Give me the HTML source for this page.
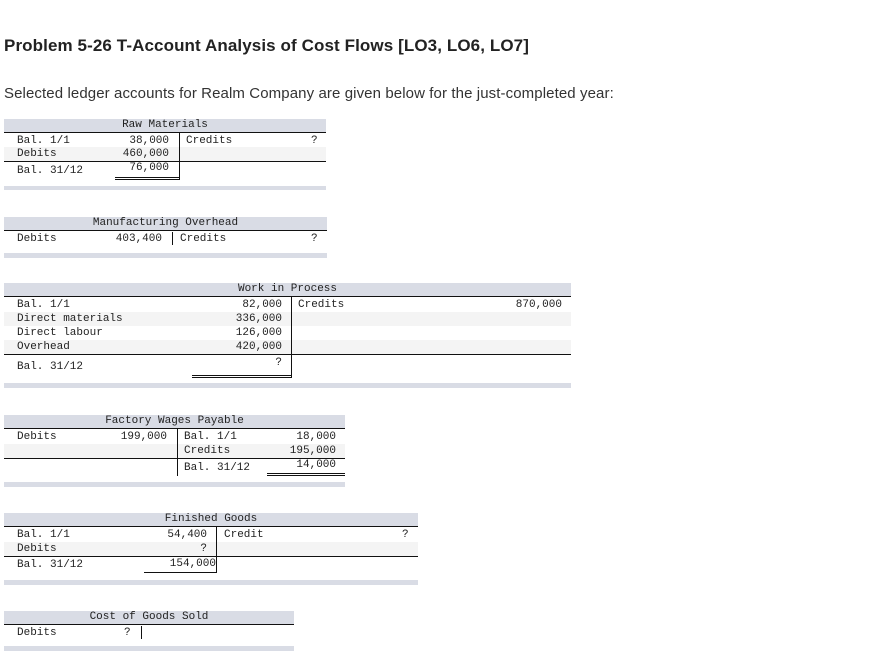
<!DOCTYPE html>
<html><head><meta charset="utf-8"><style>
*{margin:0;padding:0;box-sizing:border-box}
body{width:880px;height:651px;background:#fff;position:relative;overflow:hidden;font-family:"Liberation Sans",sans-serif;color:#222}
.a{position:absolute}
.t{position:absolute;font:11px/14px "Liberation Mono",monospace;white-space:pre;color:#222}
.band{position:absolute;background:#d9dce5}
.lg{position:absolute;background:#f4f4f4}
.k{position:absolute;background:#111}
</style></head><body>
<div class="a" style="left:4px;top:36px;font-size:17px;font-weight:bold;color:#222;letter-spacing:0.1px;white-space:nowrap">Problem 5-26 T-Account Analysis of Cost Flows [LO3, LO6, LO7]</div>
<div class="a" style="left:4px;top:85px;font-size:15px;color:#333;letter-spacing:0.1px;white-space:nowrap">Selected ledger accounts for Realm Company are given below for the just-completed year:</div>

<!-- Raw Materials -->
<div class="band" style="left:4px;top:119px;width:322px;height:13px"></div>
<div class="t" style="left:4px;width:322px;top:118px;text-align:center">Raw Materials</div>
<div class="k" style="left:4px;top:132px;width:322px;height:1px"></div>
<div class="lg" style="left:4px;top:147px;width:322px;height:14px"></div>
<div class="k" style="left:4px;top:161px;width:322px;height:1px"></div>
<div class="k" style="left:179px;top:132px;width:1px;height:48px"></div>
<div class="k" style="left:115px;top:177px;width:64px;height:1px"></div>
<div class="k" style="left:115px;top:179px;width:64px;height:1px"></div>
<div class="t" style="left:17px;top:134px">Bal. 1/1</div>
<div class="t" style="right:711px;top:134px">38,000</div>
<div class="t" style="left:186px;top:134px">Credits</div>
<div class="t" style="left:311px;top:134px">?</div>
<div class="t" style="left:17px;top:147px">Debits</div>
<div class="t" style="right:711px;top:147px">460,000</div>
<div class="t" style="left:17px;top:164px">Bal. 31/12</div>
<div class="t" style="right:711px;top:161px">76,000</div>
<div class="band" style="left:4px;top:186px;width:322px;height:4px"></div>

<!-- Manufacturing Overhead -->
<div class="band" style="left:4px;top:217px;width:323px;height:13px"></div>
<div class="t" style="left:4px;width:323px;top:216px;text-align:center">Manufacturing Overhead</div>
<div class="k" style="left:4px;top:230px;width:323px;height:1px"></div>
<div class="k" style="left:172px;top:232px;width:1px;height:13px"></div>
<div class="t" style="left:17px;top:232px">Debits</div>
<div class="t" style="right:718px;top:232px">403,400</div>
<div class="t" style="left:180px;top:232px">Credits</div>
<div class="t" style="left:311px;top:232px">?</div>
<div class="band" style="left:4px;top:253px;width:323px;height:5px"></div>

<!-- Work in Process -->
<div class="band" style="left:4px;top:283px;width:567px;height:13px"></div>
<div class="t" style="left:4px;width:567px;top:282px;text-align:center">Work in Process</div>
<div class="k" style="left:4px;top:296px;width:567px;height:1px"></div>
<div class="lg" style="left:4px;top:312px;width:567px;height:14px"></div>
<div class="lg" style="left:4px;top:340px;width:567px;height:14px"></div>
<div class="k" style="left:4px;top:354px;width:567px;height:1px"></div>
<div class="k" style="left:291px;top:296px;width:1px;height:82px"></div>
<div class="k" style="left:192px;top:375px;width:99px;height:1px"></div>
<div class="k" style="left:192px;top:377px;width:99px;height:1px"></div>
<div class="t" style="left:17px;top:298px">Bal. 1/1</div>
<div class="t" style="right:598px;top:298px">82,000</div>
<div class="t" style="left:298px;top:298px">Credits</div>
<div class="t" style="right:318px;top:298px">870,000</div>
<div class="t" style="left:17px;top:312px">Direct materials</div>
<div class="t" style="right:598px;top:312px">336,000</div>
<div class="t" style="left:17px;top:326px">Direct labour</div>
<div class="t" style="right:598px;top:326px">126,000</div>
<div class="t" style="left:17px;top:340px">Overhead</div>
<div class="t" style="right:598px;top:340px">420,000</div>
<div class="t" style="left:17px;top:360px">Bal. 31/12</div>
<div class="t" style="right:598px;top:356px">?</div>
<div class="band" style="left:4px;top:383px;width:567px;height:5px"></div>

<!-- Factory Wages Payable -->
<div class="band" style="left:4px;top:415px;width:341px;height:13px"></div>
<div class="t" style="left:4px;width:341px;top:414px;text-align:center">Factory Wages Payable</div>
<div class="k" style="left:4px;top:428px;width:341px;height:1px"></div>
<div class="lg" style="left:4px;top:444px;width:341px;height:14px"></div>
<div class="k" style="left:4px;top:458px;width:341px;height:1px"></div>
<div class="k" style="left:177px;top:428px;width:1px;height:48px"></div>
<div class="k" style="left:267px;top:473px;width:78px;height:1px"></div>
<div class="k" style="left:267px;top:475px;width:78px;height:1px"></div>
<div class="t" style="left:17px;top:430px">Debits</div>
<div class="t" style="right:713px;top:430px">199,000</div>
<div class="t" style="left:184px;top:430px">Bal. 1/1</div>
<div class="t" style="right:544px;top:430px">18,000</div>
<div class="t" style="left:184px;top:444px">Credits</div>
<div class="t" style="right:544px;top:444px">195,000</div>
<div class="t" style="left:184px;top:461px">Bal. 31/12</div>
<div class="t" style="right:544px;top:458px">14,000</div>
<div class="band" style="left:4px;top:482px;width:341px;height:5px"></div>

<!-- Finished Goods -->
<div class="band" style="left:4px;top:513px;width:414px;height:13px"></div>
<div class="t" style="left:4px;width:414px;top:512px;text-align:center">Finished Goods</div>
<div class="k" style="left:4px;top:526px;width:414px;height:1px"></div>
<div class="lg" style="left:4px;top:542px;width:414px;height:14px"></div>
<div class="k" style="left:4px;top:556px;width:414px;height:1px"></div>
<div class="k" style="left:216px;top:526px;width:1px;height:47px"></div>
<div class="k" style="left:144px;top:572px;width:73px;height:1px"></div>
<div class="t" style="left:17px;top:528px">Bal. 1/1</div>
<div class="t" style="right:673px;top:528px">54,400</div>
<div class="t" style="left:224px;top:528px">Credit</div>
<div class="t" style="left:402px;top:528px">?</div>
<div class="t" style="left:17px;top:542px">Debits</div>
<div class="t" style="right:673px;top:542px">?</div>
<div class="t" style="left:17px;top:558px">Bal. 31/12</div>
<div class="t" style="right:664px;top:557px">154,000</div>
<div class="band" style="left:4px;top:580px;width:414px;height:5px"></div>

<!-- COGS -->
<div class="band" style="left:4px;top:611px;width:290px;height:13px"></div>
<div class="t" style="left:4px;width:290px;top:610px;text-align:center">Cost of Goods Sold</div>
<div class="k" style="left:4px;top:624px;width:290px;height:1px"></div>
<div class="k" style="left:141px;top:626px;width:1px;height:13px"></div>
<div class="t" style="left:17px;top:626px">Debits</div>
<div class="t" style="left:124px;top:626px">?</div>
<div class="band" style="left:4px;top:646px;width:290px;height:5px"></div>
</body></html>
